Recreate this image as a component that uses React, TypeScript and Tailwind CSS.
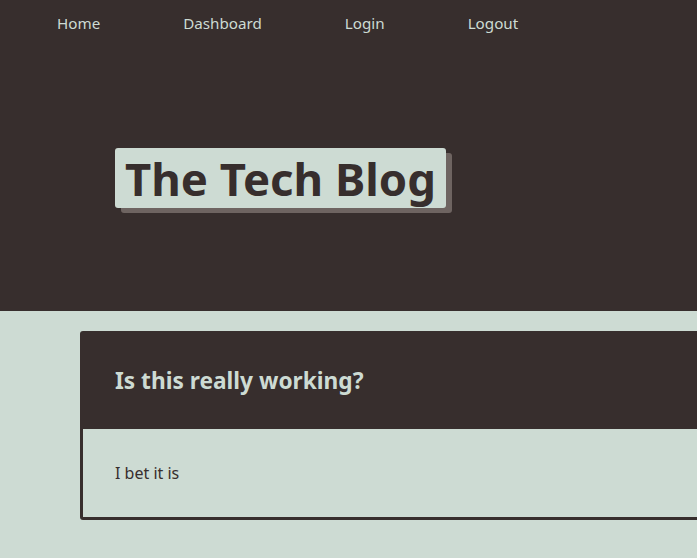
export default function App() {
  const links = ["Home", "Dashboard", "Login", "Logout"];
  return (
    <div className="min-h-[558px] w-full overflow-hidden bg-[#cddbd3] font-['Noto_Sans',sans-serif]">
      {/* Header */}
      <header className="h-[311px] bg-[#372e2d]">
        <nav className="flex gap-[83px] pl-[57px] pt-[11px]">
          {links.map((l) => (
            <a key={l} href="#" className="text-[15.2px] leading-[24px] text-[#cddbd3]">
              {l}
            </a>
          ))}
        </nav>
        <div className="pl-[115px] pt-[113px]">
          <h1 className="inline-block rounded-[3px] bg-[#cddbd3] px-[10px] text-[45.5px] font-bold leading-[60px] text-[#372e2d] shadow-[6px_5px_0_#6e6461]">
            The Tech Blog
          </h1>
        </div>
      </header>

      {/* Post */}
      <main className="pl-[80px] pt-[20px] pb-[39px]">
        <article className="w-[700px] overflow-hidden rounded-[3px] border-[3px] border-[#372e2d]">
          <div className="flex h-[95px] items-center bg-[#372e2d] pl-[32px]">
            <h2 className="text-[22.7px] font-bold text-[#cddbd3]">Is this really working?</h2>
          </div>
          <div className="flex h-[88px] items-center pl-[32px]">
            <p className="text-[16px] text-[#372e2d]">I bet it is</p>
          </div>
        </article>
      </main>
    </div>
  );
}
